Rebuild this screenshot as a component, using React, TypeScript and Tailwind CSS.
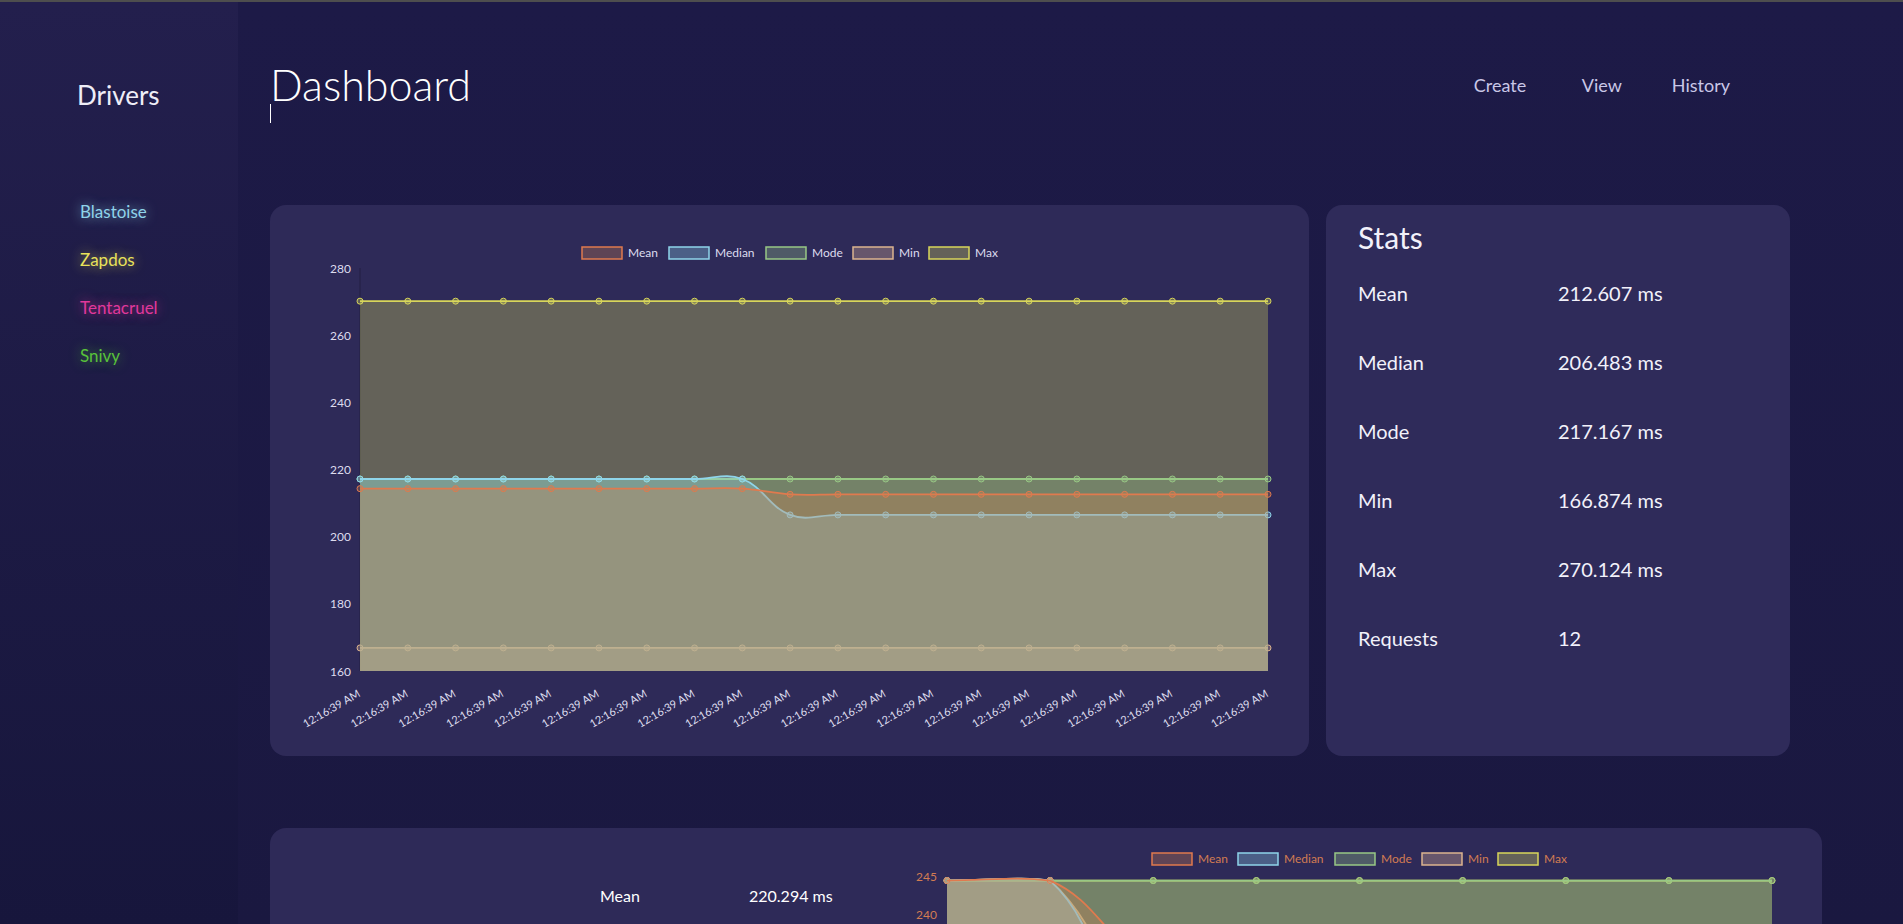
import React from "react";

type Pt = { x: number; y: number };
type Area = { left: number; right: number; top: number; bottom: number };
type DS = { label: string; data: number[]; line: string; fill: string };

const SVG_FONT = "Lato, 'Noto Sans', sans-serif";

function splinePath(pts: Pt[], t: number, area: Area) {
  const clamp = (p: Pt) => ({
    x: Math.min(Math.max(p.x, area.left), area.right),
    y: Math.min(Math.max(p.y, area.top), area.bottom),
  });
  const cps = pts.map((cur, i) => {
    const prev = pts[i - 1] ?? cur;
    const next = pts[i + 1] ?? cur;
    const d01 = Math.hypot(cur.x - prev.x, cur.y - prev.y);
    const d12 = Math.hypot(next.x - cur.x, next.y - cur.y);
    let s01 = d01 / (d01 + d12);
    let s12 = d12 / (d01 + d12);
    if (isNaN(s01)) s01 = 0;
    if (isNaN(s12)) s12 = 0;
    const fa = t * s01;
    const fb = t * s12;
    return {
      prev: clamp({ x: cur.x - fa * (next.x - prev.x), y: cur.y - fa * (next.y - prev.y) }),
      next: clamp({ x: cur.x + fb * (next.x - prev.x), y: cur.y + fb * (next.y - prev.y) }),
    };
  });
  let d = `M ${pts[0].x} ${pts[0].y}`;
  for (let i = 1; i < pts.length; i++) {
    d += ` C ${cps[i - 1].next.x} ${cps[i - 1].next.y} ${cps[i].prev.x} ${cps[i].prev.y} ${pts[i].x} ${pts[i].y}`;
  }
  return d;
}

type ChartProps = {
  width: number;
  height: number;
  area: Area;
  yMax: number;
  pxPerUnit: number;
  yTicks: number[];
  yLabelX: number;
  datasets: DS[];
  legendXs: number[];
  legendTop: number;
  textColor: string;
  xLabels?: string[];
  xLabelY?: number;
  axisLine?: boolean;
};

function LineChart(p: ChartProps) {
  const n = p.datasets[0].data.length;
  const step = (p.area.right - p.area.left) / (n - 1);
  const xs = Array.from({ length: n }, (_, i) => p.area.left + i * step);
  const yOf = (v: number) => p.area.top + (p.yMax - v) * p.pxPerUnit;
  const drawOrder = [...p.datasets].reverse();
  return (
    <svg width={p.width} height={p.height} className="block" style={{ fontFamily: SVG_FONT }}>
      {p.axisLine && (
        <line x1={p.area.left} y1={p.area.top} x2={p.area.left} y2={p.area.bottom} stroke="rgba(0,0,0,0.25)" strokeWidth={1} />
      )}
      {drawOrder.map((ds) => {
        const pts = ds.data.map((v, i) => ({ x: xs[i], y: yOf(v) }));
        const d = splinePath(pts, 0.4, p.area);
        const fillD = `${d} L ${xs[n - 1]} ${p.area.bottom} L ${xs[0]} ${p.area.bottom} Z`;
        return (
          <g key={ds.label}>
            <path d={fillD} fill={ds.fill} stroke="none" />
            <path d={d} fill="none" stroke={ds.line} strokeWidth={1.8} />
            {pts.map((pt, i) => (
              <circle key={i} cx={pt.x} cy={pt.y} r={3} fill={ds.fill} stroke={ds.line} strokeWidth={1} />
            ))}
          </g>
        );
      })}
      {p.yTicks.map((v) => (
        <text key={v} x={p.yLabelX} y={yOf(v) + 1.5} textAnchor="end" dominantBaseline="middle" fontSize={12} fill={p.textColor}>
          {v}
        </text>
      ))}
      {p.xLabels &&
        xs.map((x, i) => (
          <text
            key={i}
            x={x + 1}
            y={p.xLabelY}
            textAnchor="end"
            fontSize={11}
            fill={p.textColor}
            transform={`rotate(-30 ${x + 1} ${p.xLabelY})`}
          >
            {p.xLabels![i]}
          </text>
        ))}
      {p.datasets.map((ds, i) => (
        <g key={ds.label}>
          <rect x={p.legendXs[i]} y={p.legendTop} width={40} height={12} fill={ds.fill} stroke={ds.line} strokeWidth={1.5} />
          <text x={p.legendXs[i] + 46} y={p.legendTop + 6.5} dominantBaseline="middle" fontSize={12} fill={p.textColor}>
            {ds.label}
          </text>
        </g>
      ))}
    </svg>
  );
}

const COLORS = {
  mean: { line: "#e07a4e", fill: "rgba(209,129,81,0.3)" },
  median: { line: "#8fd5ea", fill: "rgba(143,219,244,0.3)" },
  mode: { line: "#98c885", fill: "rgba(155,205,140,0.3)" },
  min: { line: "#dcb48e", fill: "rgba(235,190,155,0.3)" },
  max: { line: "#d8d65a", fill: "rgba(226,228,94,0.3)" },
};

const N1 = 20;
const chart1: DS[] = [
  { label: "Mean", data: Array.from({ length: N1 }, (_, i) => (i <= 8 ? 214.3 : 212.607)), ...COLORS.mean },
  { label: "Median", data: Array.from({ length: N1 }, (_, i) => (i <= 8 ? 217.167 : 206.483)), ...COLORS.median },
  { label: "Mode", data: Array.from({ length: N1 }, () => 217.167), ...COLORS.mode },
  { label: "Min", data: Array.from({ length: N1 }, () => 166.874), ...COLORS.min },
  { label: "Max", data: Array.from({ length: N1 }, () => 270.124), ...COLORS.max },
];

const chart2: DS[] = [
  { label: "Mean", data: [244.4, 244.4, 233, 230, 228, 226, 224, 222, 220.3], ...COLORS.mean },
  { label: "Median", data: [244.4, 244.4, 220, 218, 216, 214, 212, 211, 210], ...COLORS.median },
  { label: "Mode", data: Array.from({ length: 9 }, () => 244.4), ...COLORS.mode },
  { label: "Min", data: [244.4, 244.4, 220, 200, 195, 190, 185, 180, 175], ...COLORS.min },
  { label: "Max", data: Array.from({ length: 9 }, () => 244.4), ...COLORS.max },
];

const drivers = [
  { name: "Blastoise", cls: "text-[#8fd3ea] [text-shadow:0_0_12px_rgba(143,211,234,0.75)]" },
  { name: "Zapdos", cls: "text-[#e9e25a] [text-shadow:0_0_12px_rgba(233,226,90,0.7)]" },
  { name: "Tentacruel", cls: "text-[#e0389b] [text-shadow:0_0_12px_rgba(224,56,155,0.75)]" },
  { name: "Snivy", cls: "text-[#58c23a] [text-shadow:0_0_12px_rgba(88,194,58,0.7)]" },
];

const stats = [
  ["Mean", "212.607 ms"],
  ["Median", "206.483 ms"],
  ["Mode", "217.167 ms"],
  ["Min", "166.874 ms"],
  ["Max", "270.124 ms"],
  ["Requests", "12"],
];

export default function App() {
  return (
    <div className="h-screen w-full overflow-hidden flex flex-col bg-[#1c1a44] font-['Lato','Noto_Sans',sans-serif]">
      <div className="h-[2px] shrink-0 bg-[#4e4e4e]" />
      <div className="flex flex-1 min-h-0">
        <aside className="w-[238px] shrink-0 bg-linear-to-b from-[#231f4d] to-[#17163c] pl-[77px] pt-[77px]">
          <h2 className="text-[26px] leading-[32px] text-[#eeedf7]">Drivers</h2>
          <ul className="mt-[77px] pl-[3px]">
            {drivers.map((d) => (
              <li key={d.name} className={`h-[48px] flex items-center text-[17px] ${d.cls}`}>
                {d.name}
              </li>
            ))}
          </ul>
        </aside>
        <main className="flex-1 min-w-0 bg-linear-to-b from-[#1d1a47] to-[#1a1840] pl-[32px]">
          <header className="flex items-center pt-[58px]">
            <h1 className="text-[43px] leading-[50px] font-light text-white">Dashboard</h1>
            <nav className="ml-auto pr-[173px] flex text-[18px] leading-[24px] text-[#c9c7e7]">
              <a className="w-[108px]">Create</a>
              <a className="w-[90px]">View</a>
              <a>History</a>
            </nav>
          </header>
          <div className="w-px h-[19px] bg-white -mt-[6px]" />

          <div className="mt-[82px] flex gap-[17px]">
            <div className="w-[1039px] h-[551px] shrink-0 rounded-2xl bg-[#2e2a58] overflow-hidden">
              <LineChart
                width={1039}
                height={551}
                area={{ left: 90, right: 998, top: 63, bottom: 466 }}
                yMax={280}
                pxPerUnit={403 / 120}
                yTicks={[280, 260, 240, 220, 200, 180, 160]}
                yLabelX={81}
                datasets={chart1}
                legendXs={[312, 399, 496, 583, 659]}
                legendTop={42}
                textColor="#dddcee"
                xLabels={Array.from({ length: N1 }, () => "12:16:39 AM")}
                xLabelY={491}
                axisLine
              />
            </div>
            <div className="w-[464px] h-[551px] shrink-0 rounded-2xl bg-[#2f2b5a] pl-[32px] pt-[14px] text-[#f2f1fa]">
              <h3 className="text-[30px] leading-[36px]">Stats</h3>
              <div className="mt-[3px] grid grid-cols-[200px_1fr]">
                {stats.map(([k, v]) => (
                  <React.Fragment key={k}>
                    <div className="h-[69px] flex items-center text-[20px]">{k}</div>
                    <div className="h-[69px] flex items-center text-[20px]">{v}</div>
                  </React.Fragment>
                ))}
              </div>
            </div>
          </div>

          <div className="mt-[72px] w-[1552px] h-[96px] rounded-t-2xl bg-[#2e2a58] flex overflow-hidden">
            <div className="w-[620px] shrink-0 pl-[330px] pt-[40px] text-white">
              <div className="grid grid-cols-[149px_1fr]">
                <div className="h-[56px] flex items-center text-[16px]">Mean</div>
                <div className="h-[56px] flex items-center text-[16px]">220.294 ms</div>
              </div>
            </div>
            <LineChart
              width={932}
              height={96}
              area={{ left: 57, right: 882, top: 48, bottom: 400 }}
              yMax={245}
              pxPerUnit={7.6}
              yTicks={[245, 240]}
              yLabelX={47}
              datasets={chart2}
              legendXs={[262, 348, 445, 532, 608]}
              legendTop={25}
              textColor="#d27c52"
            />
          </div>
        </main>
      </div>
    </div>
  );
}
